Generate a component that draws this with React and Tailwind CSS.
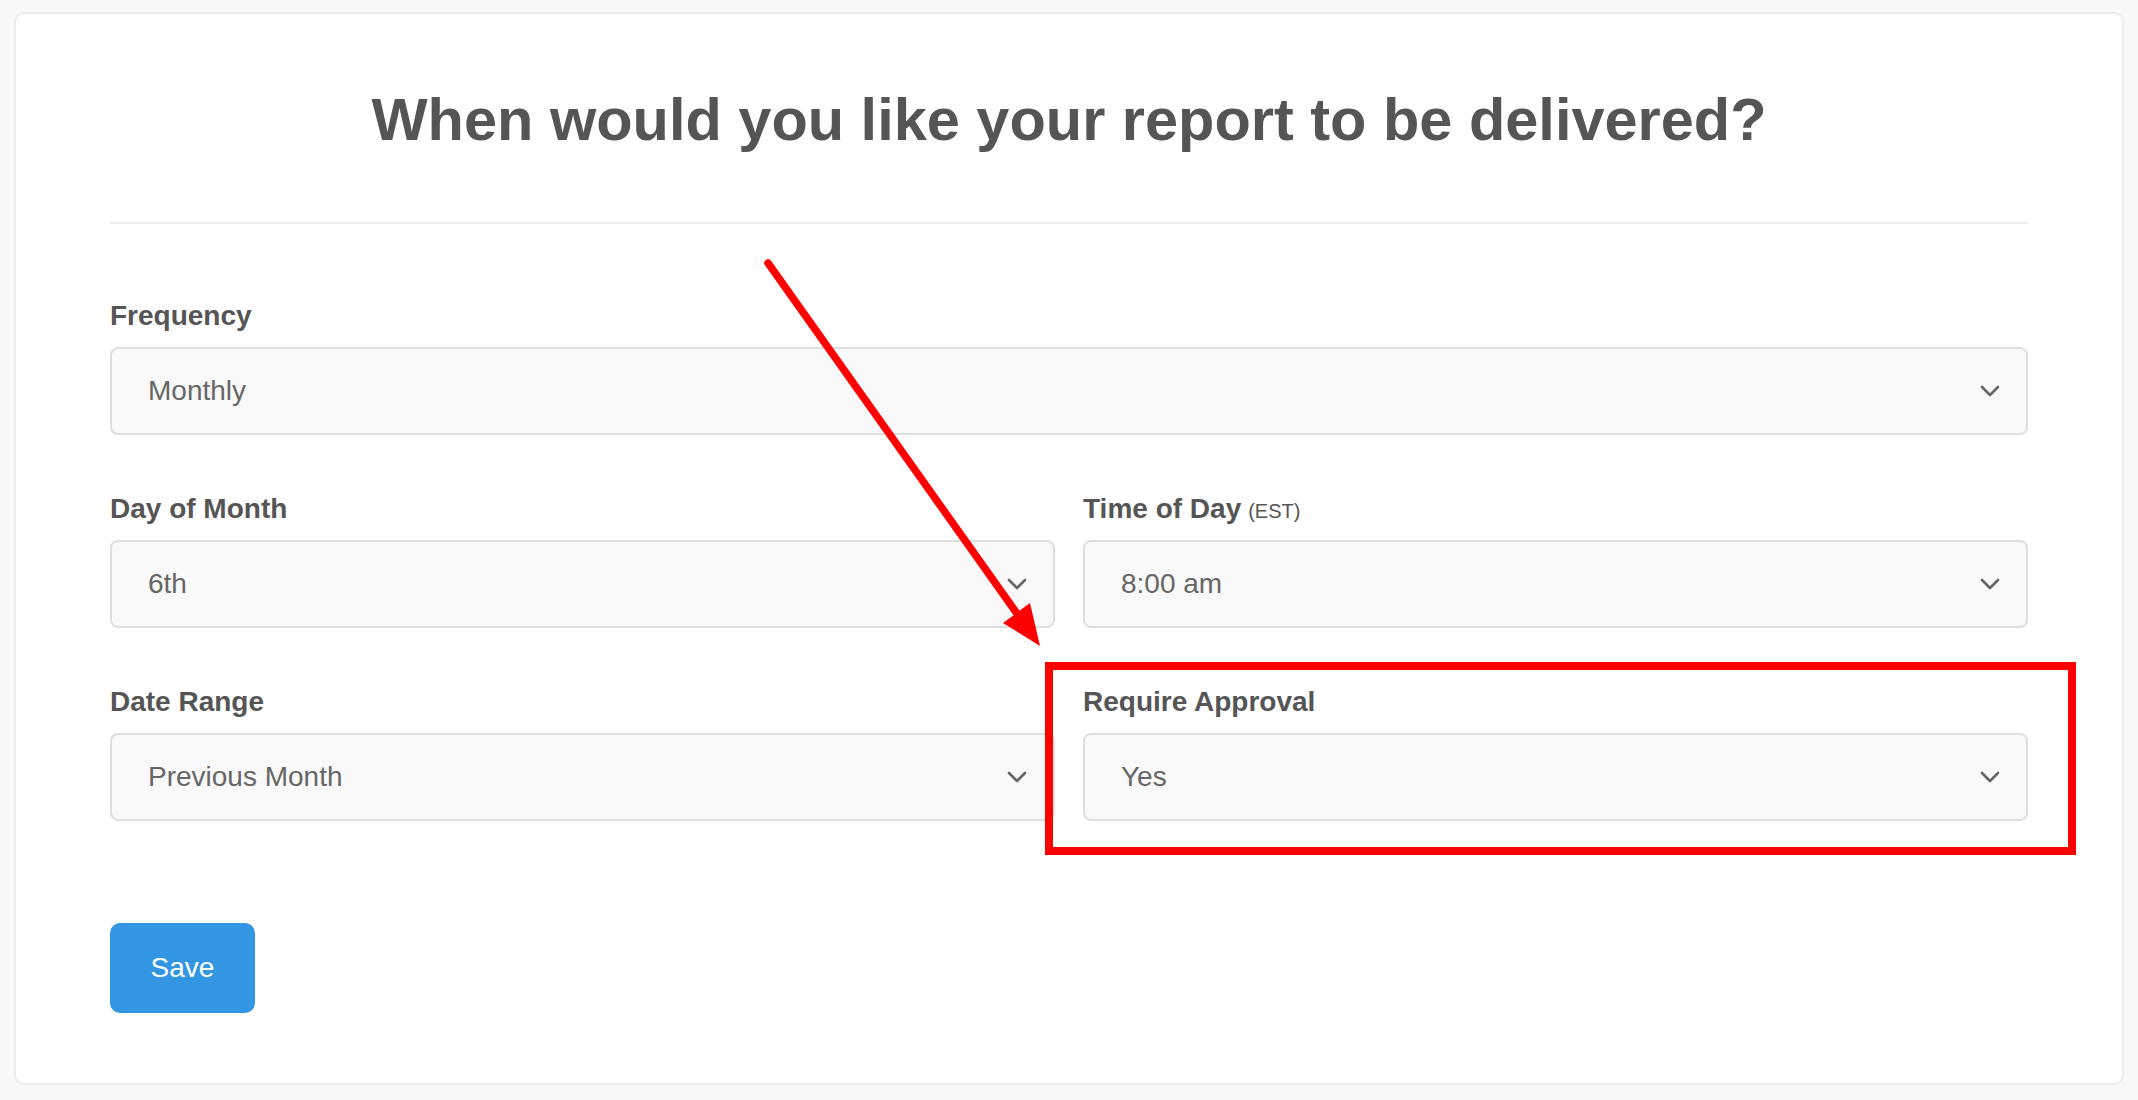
import React from 'react';

const font = { fontFamily: '"Liberation Sans", Arial, sans-serif' };

function Chevron() {
  return (
    <svg width="20" height="12" viewBox="0 0 20 12" fill="none">
      <path d="M2 2l8 8 8-8" stroke="#666" strokeWidth="2.6" strokeLinecap="round" strokeLinejoin="round" />
    </svg>
  );
}

function SelectField({ label, hint, value }) {
  return (
    <div className="flex flex-col">
      <div className="h-[34px] text-[28px] leading-[34px] font-bold text-[#555] mb-[14px]">
        {label}
        {hint && <span className="text-[20px] leading-none font-normal ml-[7px]">{hint}</span>}
      </div>
      <div className="h-[88px] flex items-center justify-between bg-[#f9f9f9] border-2 border-[#dedede] rounded-[8px] pl-[36px] pr-[26px]">
        <span className="text-[28px] text-[#666]">{value}</span>
        <Chevron />
      </div>
    </div>
  );
}

export default function App() {
  return (
    <div className="relative min-h-[1100px] bg-[#f8f8f8] pt-[12px] px-[14px]" style={font}>
      <div className="bg-white border-2 border-[#ebebeb] rounded-[10px] px-[94px] pt-[72px] pb-[70px]">
        <h1 className="text-center text-[59.5px] leading-[68px] font-bold text-[#555]">
          When would you like your report to be delivered?
        </h1>
        <div className="h-[2px] bg-[#ececec] mt-[68px]" />

        <div className="mt-[75px] flex flex-col gap-[57px]">
          <SelectField label="Frequency" value="Monthly" />
          <div className="grid grid-cols-2 gap-x-[28px] gap-y-[57px]">
            <SelectField label="Day of Month" value="6th" />
            <SelectField label="Time of Day" hint="(EST)" value="8:00 am" />
            <SelectField label="Date Range" value="Previous Month" />
            <SelectField label="Require Approval" value="Yes" />
          </div>
        </div>

        <button className="mt-[102px] w-[145px] h-[90px] rounded-[10px] bg-[#3396e2] text-white text-[28px]">
          Save
        </button>
      </div>

      <svg className="absolute inset-0 pointer-events-none" width="2138" height="1100" viewBox="0 0 2138 1100">
        <line x1="768" y1="263" x2="1018" y2="615" stroke="#ff0000" strokeWidth="7.5" strokeLinecap="round" />
        <polygon points="1040,646 1003,623 1030,603" fill="#ff0000" />
        <rect x="1049" y="666" width="1023" height="185" fill="none" stroke="#ff0000" strokeWidth="8" />
      </svg>
    </div>
  );
}
